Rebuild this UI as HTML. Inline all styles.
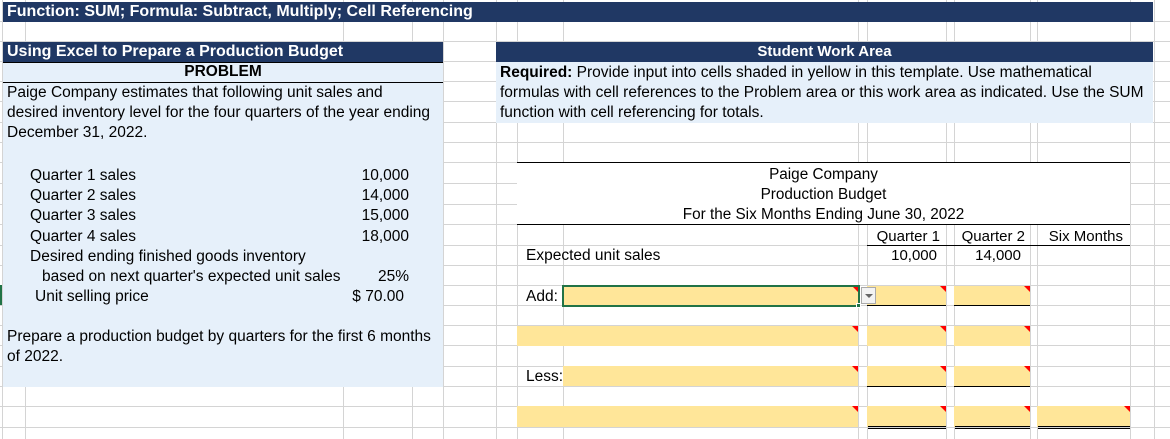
<!DOCTYPE html>
<html><head><meta charset="utf-8"><style>
*{margin:0;padding:0;box-sizing:border-box}
body{width:1170px;height:439px;overflow:hidden;background:#fff;position:relative;font-family:"Liberation Sans",Arial,sans-serif;color:#000}
.a{position:absolute;white-space:nowrap}
.t{font-size:15.5px;line-height:20px}
.n{font-family:"Liberation Sans Narrow","Liberation Sans",sans-serif;font-size:15px;line-height:20px}
.y{position:absolute;background:#ffe699}
.tri{position:absolute;width:0;height:0;border-top:6px solid #f00;border-left:6px solid transparent}
.bl{position:absolute;height:1px;background:#000}
</style></head><body>
<svg class="a" style="left:0;top:0" width="1170" height="439">
<g stroke="#d4d4d4" stroke-width="1">
<line x1="0" y1="21.5" x2="1170" y2="21.5"/><line x1="0" y1="41.5" x2="1170" y2="41.5"/><line x1="0" y1="61.5" x2="1170" y2="61.5"/><line x1="0" y1="81.5" x2="1170" y2="81.5"/><line x1="0" y1="101.5" x2="1170" y2="101.5"/><line x1="0" y1="122.5" x2="1170" y2="122.5"/><line x1="0" y1="142.5" x2="1170" y2="142.5"/><line x1="0" y1="162.5" x2="1170" y2="162.5"/><line x1="0" y1="183.5" x2="1170" y2="183.5"/><line x1="0" y1="204.5" x2="1170" y2="204.5"/><line x1="0" y1="224.5" x2="1170" y2="224.5"/><line x1="0" y1="245.5" x2="1170" y2="245.5"/><line x1="0" y1="265.5" x2="1170" y2="265.5"/><line x1="0" y1="285.5" x2="1170" y2="285.5"/><line x1="0" y1="305.5" x2="1170" y2="305.5"/><line x1="0" y1="325.5" x2="1170" y2="325.5"/><line x1="0" y1="345.5" x2="1170" y2="345.5"/><line x1="0" y1="366.5" x2="1170" y2="366.5"/><line x1="0" y1="386.5" x2="1170" y2="386.5"/><line x1="0" y1="406.5" x2="1170" y2="406.5"/><line x1="0" y1="427.5" x2="1170" y2="427.5"/>
<line x1="2.5" y1="0" x2="2.5" y2="439"/><line x1="25.5" y1="0" x2="25.5" y2="439"/><line x1="343.5" y1="0" x2="343.5" y2="439"/><line x1="412.5" y1="0" x2="412.5" y2="439"/><line x1="443.5" y1="0" x2="443.5" y2="439"/><line x1="496.5" y1="0" x2="496.5" y2="439"/><line x1="517.5" y1="0" x2="517.5" y2="439"/><line x1="563.5" y1="0" x2="563.5" y2="439"/><line x1="858.5" y1="0" x2="858.5" y2="439"/><line x1="867.5" y1="0" x2="867.5" y2="439"/><line x1="946.5" y1="0" x2="946.5" y2="439"/><line x1="954.5" y1="0" x2="954.5" y2="439"/><line x1="1030.5" y1="0" x2="1030.5" y2="439"/><line x1="1037.5" y1="0" x2="1037.5" y2="439"/><line x1="1130.5" y1="0" x2="1130.5" y2="439"/><line x1="1154.5" y1="0" x2="1154.5" y2="439"/>
</g></svg>
<div class="a" style="left:3px;top:2px;width:1150px;height:20px;background:#203864"></div>
<div class="a" style="left:7px;top:2px;color:#fff;font-weight:bold;font-size:16px;line-height:19px">Function: SUM; Formula: Subtract, Multiply; Cell Referencing</div>
<div class="a" style="left:3px;top:42px;width:440px;height:20px;background:#203864"></div>
<div class="a" style="left:7px;top:42px;color:#fff;font-weight:bold;font-size:16px;line-height:20px">Using Excel to Prepare a Production Budget</div>
<div class="a" style="left:3px;top:62px;width:440px;height:325px;background:#e6f0fa"></div>
<div class="bl" style="left:3px;top:62px;width:440px"></div>
<div class="bl" style="left:3px;top:82px;width:440px"></div>
<div class="a" style="left:3px;top:62px;width:440px;text-align:center;font-weight:bold;font-size:15.5px;line-height:20px">PROBLEM</div>
<div class="a t" style="left:7px;top:83px">Paige Company estimates that following unit sales and</div>
<div class="a t" style="left:7px;top:103px">desired inventory level for the four quarters of the year ending</div>
<div class="a t" style="left:7px;top:123px">December 31, 2022.</div>
<div class="a t" style="left:30px;top:166px">Quarter 1 sales</div>
<div class="a t" style="left:30px;top:186px">Quarter 2 sales</div>
<div class="a t" style="left:30px;top:206px">Quarter 3 sales</div>
<div class="a t" style="left:30px;top:227px">Quarter 4 sales</div>
<div class="a t" style="left:30px;top:247px">Desired ending finished goods inventory</div>
<div class="a t" style="left:42px;top:267px">based on next quarter's expected unit sales</div>
<div class="a t" style="left:35px;top:287px">Unit selling price</div>
<div class="a t" style="left:300px;top:166px;width:109px;text-align:right">10,000</div>
<div class="a t" style="left:300px;top:186px;width:109px;text-align:right">14,000</div>
<div class="a t" style="left:300px;top:206px;width:109px;text-align:right">15,000</div>
<div class="a t" style="left:300px;top:227px;width:109px;text-align:right">18,000</div>
<div class="a t" style="left:300px;top:267px;width:109px;text-align:right">25%</div>
<div class="a t" style="left:300px;top:287px;width:104px;text-align:right">$ 70.00</div>
<div class="a t" style="left:7px;top:327px">Prepare a production budget by quarters for the first 6 months</div>
<div class="a t" style="left:7px;top:347px">of 2022.</div>
<div class="a" style="left:0;top:285px;width:2px;height:20px;background:#217346"></div>
<div class="a" style="left:496px;top:42px;width:657px;height:20px;background:#203864"></div>
<div class="a n" style="left:496px;top:42px;width:657px;text-align:center;color:#fff;font-weight:bold">Student Work Area</div>
<div class="a" style="left:496px;top:62px;width:657px;height:61px;background:#e6f0fa"></div>
<div class="a n" style="left:500px;top:63px;font-size:15.5px"><b>Required:</b> Provide input into cells shaded in yellow in this template. Use mathematical</div>
<div class="a n" style="left:500px;top:83px;font-size:15.5px">formulas with cell references to the Problem area or this work area as indicated. Use the SUM</div>
<div class="a n" style="left:500px;top:103px;font-size:15.5px">function with cell referencing for totals.</div>
<div class="a" style="left:517px;top:163px;width:613px;height:61px;background:#fff"></div>
<div class="bl" style="left:517px;top:162px;width:613px"></div>
<div class="bl" style="left:517px;top:224px;width:613px"></div>
<div class="a n" style="left:517px;top:165px;width:613px;text-align:center;font-size:15.3px">Paige Company</div>
<div class="a n" style="left:517px;top:185px;width:613px;text-align:center;font-size:15.3px">Production Budget</div>
<div class="a n" style="left:517px;top:205px;width:613px;text-align:center;font-size:15.3px">For the Six Months Ending June 30, 2022</div>
<div class="a n" style="left:860px;top:227px;width:80px;text-align:right">Quarter 1</div>
<div class="a n" style="left:945px;top:227px;width:80px;text-align:right">Quarter 2</div>
<div class="a n" style="left:1030px;top:227px;width:93px;text-align:right">Six Months</div>
<div class="bl" style="left:867px;top:245px;width:263px;background:#000"></div>
<div class="a n" style="left:526px;top:246px;font-size:15.5px">Expected unit sales</div>
<div class="a n" style="left:860px;top:246px;width:77px;text-align:right">10,000</div>
<div class="a n" style="left:945px;top:246px;width:76px;text-align:right">14,000</div>
<div class="a n" style="left:526px;top:287px;font-size:15.5px">Add:</div>
<div class="a n" style="left:526px;top:367px;font-size:15.5px">Less:</div>
<div class="y" style="left:563px;top:286px;width:295px;height:20px"></div>
<div class="y" style="left:867px;top:286px;width:79px;height:20px"></div>
<div class="y" style="left:954px;top:286px;width:76px;height:20px"></div>
<div class="y" style="left:517px;top:326px;width:341px;height:20px"></div>
<div class="y" style="left:867px;top:326px;width:79px;height:20px"></div>
<div class="y" style="left:954px;top:326px;width:76px;height:20px"></div>
<div class="y" style="left:563px;top:366px;width:295px;height:20px"></div>
<div class="y" style="left:867px;top:366px;width:79px;height:20px"></div>
<div class="y" style="left:954px;top:366px;width:76px;height:20px"></div>
<div class="y" style="left:517px;top:406px;width:341px;height:21px"></div>
<div class="y" style="left:867px;top:406px;width:79px;height:21px"></div>
<div class="y" style="left:954px;top:406px;width:76px;height:21px"></div>
<div class="y" style="left:1037px;top:406px;width:93px;height:21px"></div>
<div class="bl" style="left:867px;top:305px;width:79px"></div>
<div class="bl" style="left:954px;top:305px;width:76px"></div>
<div class="bl" style="left:867px;top:386px;width:79px"></div>
<div class="bl" style="left:954px;top:386px;width:76px"></div>
<div class="bl" style="left:868px;top:426px;width:78px"></div><div class="bl" style="left:868px;top:428px;width:78px"></div>
<div class="bl" style="left:955px;top:426px;width:75px"></div><div class="bl" style="left:955px;top:428px;width:75px"></div>
<div class="bl" style="left:1038px;top:426px;width:92px"></div><div class="bl" style="left:1038px;top:428px;width:92px"></div>
<div class="tri" style="left:852px;top:286px"></div><div class="tri" style="left:940px;top:286px"></div><div class="tri" style="left:1024px;top:286px"></div>
<div class="tri" style="left:852px;top:326px"></div><div class="tri" style="left:940px;top:326px"></div><div class="tri" style="left:1024px;top:326px"></div>
<div class="tri" style="left:852px;top:366px"></div><div class="tri" style="left:940px;top:366px"></div><div class="tri" style="left:1024px;top:366px"></div>
<div class="tri" style="left:852px;top:406px"></div><div class="tri" style="left:940px;top:406px"></div><div class="tri" style="left:1024px;top:406px"></div><div class="tri" style="left:1124px;top:406px"></div>
<div class="a" style="left:562px;top:285px;width:298px;height:22px;border:2px solid #217346"></div>
<div class="a" style="left:856px;top:303px;width:5px;height:5px;background:#217346;border:1px solid #fff"></div>
<div class="a" style="left:861px;top:287px;width:15px;height:17px;background:#f3f3f3;border:1px solid #aaa"></div>
<div class="a" style="left:865px;top:294px;width:0;height:0;border-left:4px solid transparent;border-right:4px solid transparent;border-top:4px solid #666"></div>
</body></html>
